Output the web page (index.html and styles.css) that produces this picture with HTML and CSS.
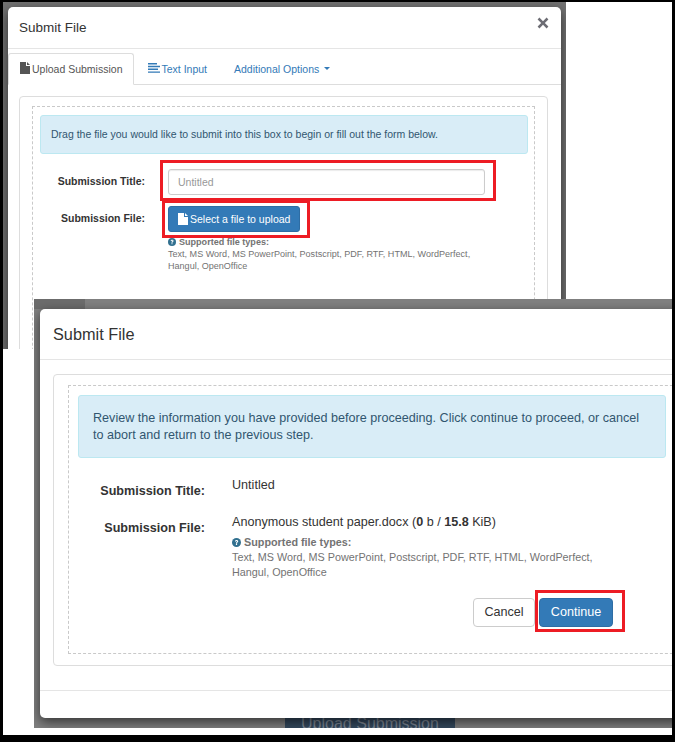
FILE: index.html
```html
<!DOCTYPE html>
<html lang="en">
<head>
<meta charset="utf-8">
<title>Submit File</title>
<link rel="stylesheet" href="styles.css">
</head>
<body>
<div class="screen">
  <section class="shot shot-one">
    <div class="modal modal-one">
      <header class="modal-head">
        <h4 class="modal-title">Submit File</h4>
        <svg class="close-x" viewBox="0 0 12 12" aria-hidden="true"><path d="M2.4 0.6 6 4.2 9.6 0.6 11.4 2.4 7.8 6 11.4 9.6 9.6 11.4 6 7.8 2.4 11.4 0.6 9.6 4.2 6 0.6 2.4Z"/></svg>
      </header>
      <nav class="tabs">
        <div class="tab tab-active">
          <svg class="ico-file" viewBox="0 0 10 12" aria-hidden="true"><path d="M0 0H6V4H10V12H0Z"/><path d="M7 0 10 3H7Z"/></svg>
          <span>Upload Submission</span>
        </div>
        <div class="tab tab-text">
          <svg class="ico-lines" viewBox="0 0 12 10" aria-hidden="true"><path d="M0 0H9V1.4H0ZM0 2.8H12V4.2H0ZM0 5.6H10V7H0ZM0 8.4H12V9.8H0Z"/></svg>
          <span>Text Input</span>
        </div>
        <div class="tab tab-more">
          <span>Additional Options</span>
          <i class="caret"></i>
        </div>
      </nav>
      <div class="panel">
        <div class="dashed">
          <p class="alert">Drag the file you would like to submit into this box to begin or fill out the form below.</p>
          <div class="row row-title">
            <div class="label">Submission Title:</div>
            <div class="input">Untitled</div>
          </div>
          <div class="row row-file">
            <div class="label">Submission File:</div>
            <div class="field">
              <div class="btn-upload">
                <svg class="ico-white" viewBox="0 0 10 12" aria-hidden="true"><path d="M0 0H6V4H10V12H0Z"/><path d="M7 0 10 3H7Z"/></svg>
                <span>Select a file to upload</span>
              </div>
              <div class="help">
                <div class="help-head"><svg class="ico-q" viewBox="0 0 12 12" aria-hidden="true"><circle cx="6" cy="6" r="6"/><path class="q" d="M3.9 4.6C4 3.3 4.9 2.6 6.1 2.6 7.4 2.6 8.3 3.4 8.3 4.4 8.3 5.9 6.7 5.9 6.8 7.2H5.2C5.1 5.4 6.6 5.3 6.6 4.5 6.6 4.1 6.4 3.9 6 3.9 5.6 3.9 5.4 4.2 5.4 4.7ZM5.2 7.8H6.8V9.4H5.2Z"/></svg><b>Supported file types:</b></div>
                <div>Text, MS Word, MS PowerPoint, Postscript, PDF, RTF, HTML, WordPerfect,<br>Hangul, OpenOffice</div>
              </div>
            </div>
          </div>
        </div>
      </div>
    </div>
    <div class="mark mark-a"></div>
    <div class="mark mark-b"></div>
  </section>

  <section class="shot shot-two">
    <div class="behind">Upload Submission</div>
    <div class="modal modal-two">
      <header class="modal-head">
        <h4 class="modal-title">Submit File</h4>
      </header>
      <div class="panel">
        <div class="dashed">
          <p class="alert">Review the information you have provided before proceeding. Click continue to proceed, or cancel<br>to abort and return to the previous step.</p>
          <div class="row row-title">
            <div class="label">Submission Title:</div>
            <div class="value">Untitled</div>
          </div>
          <div class="row row-file">
            <div class="label">Submission File:</div>
            <div class="field">
              <div class="value">Anonymous student paper.docx (<b>0</b> b / <b>15.8</b> KiB)</div>
              <div class="help">
                <div class="help-head"><svg class="ico-q" viewBox="0 0 12 12" aria-hidden="true"><circle cx="6" cy="6" r="6"/><path class="q" d="M3.9 4.6C4 3.3 4.9 2.6 6.1 2.6 7.4 2.6 8.3 3.4 8.3 4.4 8.3 5.9 6.7 5.9 6.8 7.2H5.2C5.1 5.4 6.6 5.3 6.6 4.5 6.6 4.1 6.4 3.9 6 3.9 5.6 3.9 5.4 4.2 5.4 4.7ZM5.2 7.8H6.8V9.4H5.2Z"/></svg><b>Supported file types:</b></div>
                <div>Text, MS Word, MS PowerPoint, Postscript, PDF, RTF, HTML, WordPerfect,<br>Hangul, OpenOffice</div>
              </div>
            </div>
          </div>
          <div class="actions">
            <div class="btn btn-cancel">Cancel</div>
            <div class="btn btn-continue">Continue</div>
          </div>
        </div>
      </div>
      <div class="modal-foot"></div>
    </div>
  </section>
  <div class="mark mark-c"></div>
</div>
</body>
</html>
```

FILE: styles.css
```css
* { box-sizing: border-box; }
html, body { margin: 0; padding: 0; background: #000; }
body { font-family: "Liberation Sans", Arial, sans-serif; color: #333; }
.screen { position: relative; width: 675px; height: 742px; overflow: hidden; background: #000; }
.screen::before { content: ""; position: absolute; left: 3px; top: 2px; width: 669px; height: 733px; background: #fff; }

.shot { position: absolute; overflow: hidden; }
.shot-one { left: 3px; top: 2px; width: 563px; height: 347px; background: #727272; padding: 5px 0 0 5px; }
.shot-two { left: 34px; top: 299px; width: 638px; height: 429px; background: #808080; padding: 10px 0 0 6px; }
.shot-two::before { content: ""; position: absolute; left: 0; top: 0; width: 51px; height: 10px; background: #6c6c6c; }

.modal { position: relative; background: #fff; border-radius: 5px; box-shadow: 0 4px 12px rgba(0,0,0,.6); }
.modal-one { width: 553px; height: 400px; font-size: 10.5px; }
.modal-two { width: 660px; height: 409px; font-size: 12.6px; }

.modal-head { display: flex; justify-content: space-between; align-items: center; border-bottom: 1px solid #e5e5e5; }
.modal-title { margin: 0; font-weight: 400; color: #333; }
.modal-one .modal-head { height: 42px; padding: 0 12px 0 11px; }
.modal-one .modal-title { font-size: 13.5px; }
.modal-two .modal-head { height: 51px; padding: 0 13px; }
.modal-two .modal-title { font-size: 16.3px; }
.close-x { width: 12px; height: 12px; fill: #6d6d74; margin-top: -9px; }

.tabs { display: flex; height: 36px; padding-top: 4px; border-bottom: 1px solid #ddd; color: #337ab7; }
.tab { display: flex; align-items: center; gap: 2px; padding: 0 12px; height: 31px; }
.tab-active { color: #555; background: #fff; border: 1px solid #ddd; border-bottom-color: #fff; border-radius: 3px 3px 0 0; height: 32px; padding: 0 11px; }
.tab-text { margin-left: 2px; gap: 1px; }
.tab-more { margin-left: 3px; }
.ico-file { width: 10px; height: 12px; fill: #555; margin-top: -2px; }
.ico-lines { width: 12px; height: 10px; fill: #337ab7; margin-top: -2px; }
.caret { width: 0; height: 0; margin-left: 3px; border-left: 3px solid transparent; border-right: 3px solid transparent; border-top: 3px solid #337ab7; }

.panel { border: 1px solid #ddd; border-radius: 4px; background: #fff; }
.modal-one .panel { margin: 11px 13px 0 11px; height: 300px; padding: 9px 12px; }
.modal-two .panel { margin: 14px 0 0 13px; width: 660px; height: 292px; padding: 10px 14px 11px; }
.dashed { border: 1px dashed #c9c9c9; height: 100%; }
.modal-one .dashed { padding: 8px 6px 8px 7px; }
.modal-two .dashed { padding: 9px; width: 630px; height: 269px; }

.alert { margin: 0; background: #d9edf7; border: 1px solid #bce8f1; border-radius: 3px; color: #31566f; }
.modal-one .alert { padding: 11px 10px; line-height: 14px; height: 39px; }
.modal-two .alert { padding: 14px 14px 0; line-height: 17px; height: 63px; width: 588px; }

.row { display: flex; }
.label { font-weight: 700; text-align: right; color: #333; flex: none; }
.modal-one .label { width: 105px; }
.modal-one .row-title { margin-top: 15px; align-items: flex-start; gap: 23px; }
.modal-one .row-title .label { padding-top: 6px; }
.modal-one .row-file { margin-top: 11px; gap: 23px; }
.modal-one .row-file .label { padding-top: 6px; }
.input { width: 317px; height: 26px; border: 1px solid #ccc; border-radius: 3px; color: #999; padding: 6px 9px; line-height: 13px; box-shadow: inset 0 1px 1px rgba(0,0,0,.08); }
.btn-upload { display: flex; align-items: center; gap: 2px; width: 132px; height: 26px; padding: 0 9px; background: #337ab7; border: 1px solid #2e6da4; border-radius: 3px; color: #fff; white-space: nowrap; font-size: 10.5px; }
.ico-white { width: 10px; height: 12px; fill: #fff; flex: none; }
.help { font-size: 9.05px; color: #737373; line-height: 12px; margin-top: 4px; }
.help-head { display: flex; align-items: center; gap: 3px; }
.ico-q { width: 8px; height: 8px; fill: #31708f; flex: none; }
.ico-q .q { fill: #fff; }

.modal-two .label { width: 127px; }
.modal-two .row-title { margin-top: 19px; gap: 27px; }
.modal-two .row-title .label { padding-top: 7px; }
.modal-two .row-file { margin-top: 16px; gap: 27px; }
.modal-two .row-file .label { padding-top: 7px; }
.modal-two .value { color: #333; line-height: 16px; }
.modal-two .help { font-size: 10.8px; line-height: 15px; margin-top: 5px; }
.modal-two .ico-q { width: 9px; height: 9px; }

.actions { display: flex; justify-content: flex-end; gap: 4px; margin-top: 18px; padding-right: 75px; }
.btn { height: 29px; line-height: 27px; border-radius: 4px; border: 1px solid #ccc; text-align: center; }
.btn-cancel { width: 62px; background: #fff; color: #333; }
.btn-continue { width: 74px; background: #337ab7; border-color: #2e6da4; color: #fff; }

.modal-foot { margin-top: 24px; border-top: 1px solid #e5e5e5; }

.behind { position: absolute; left: 251px; top: 413px; width: 170px; height: 16px; background: #34495e; color: #7d8794; font-size: 16px; text-align: center; line-height: 24px; }

.mark { position: absolute; border: 3px solid #ed1c24; }
.mark-a { left: 157px; top: 158px; width: 336px; height: 41px; }
.mark-b { left: 159px; top: 198px; width: 148px; height: 38px; }
.mark-c { left: 535px; top: 590px; width: 90px; height: 42px; }
```
